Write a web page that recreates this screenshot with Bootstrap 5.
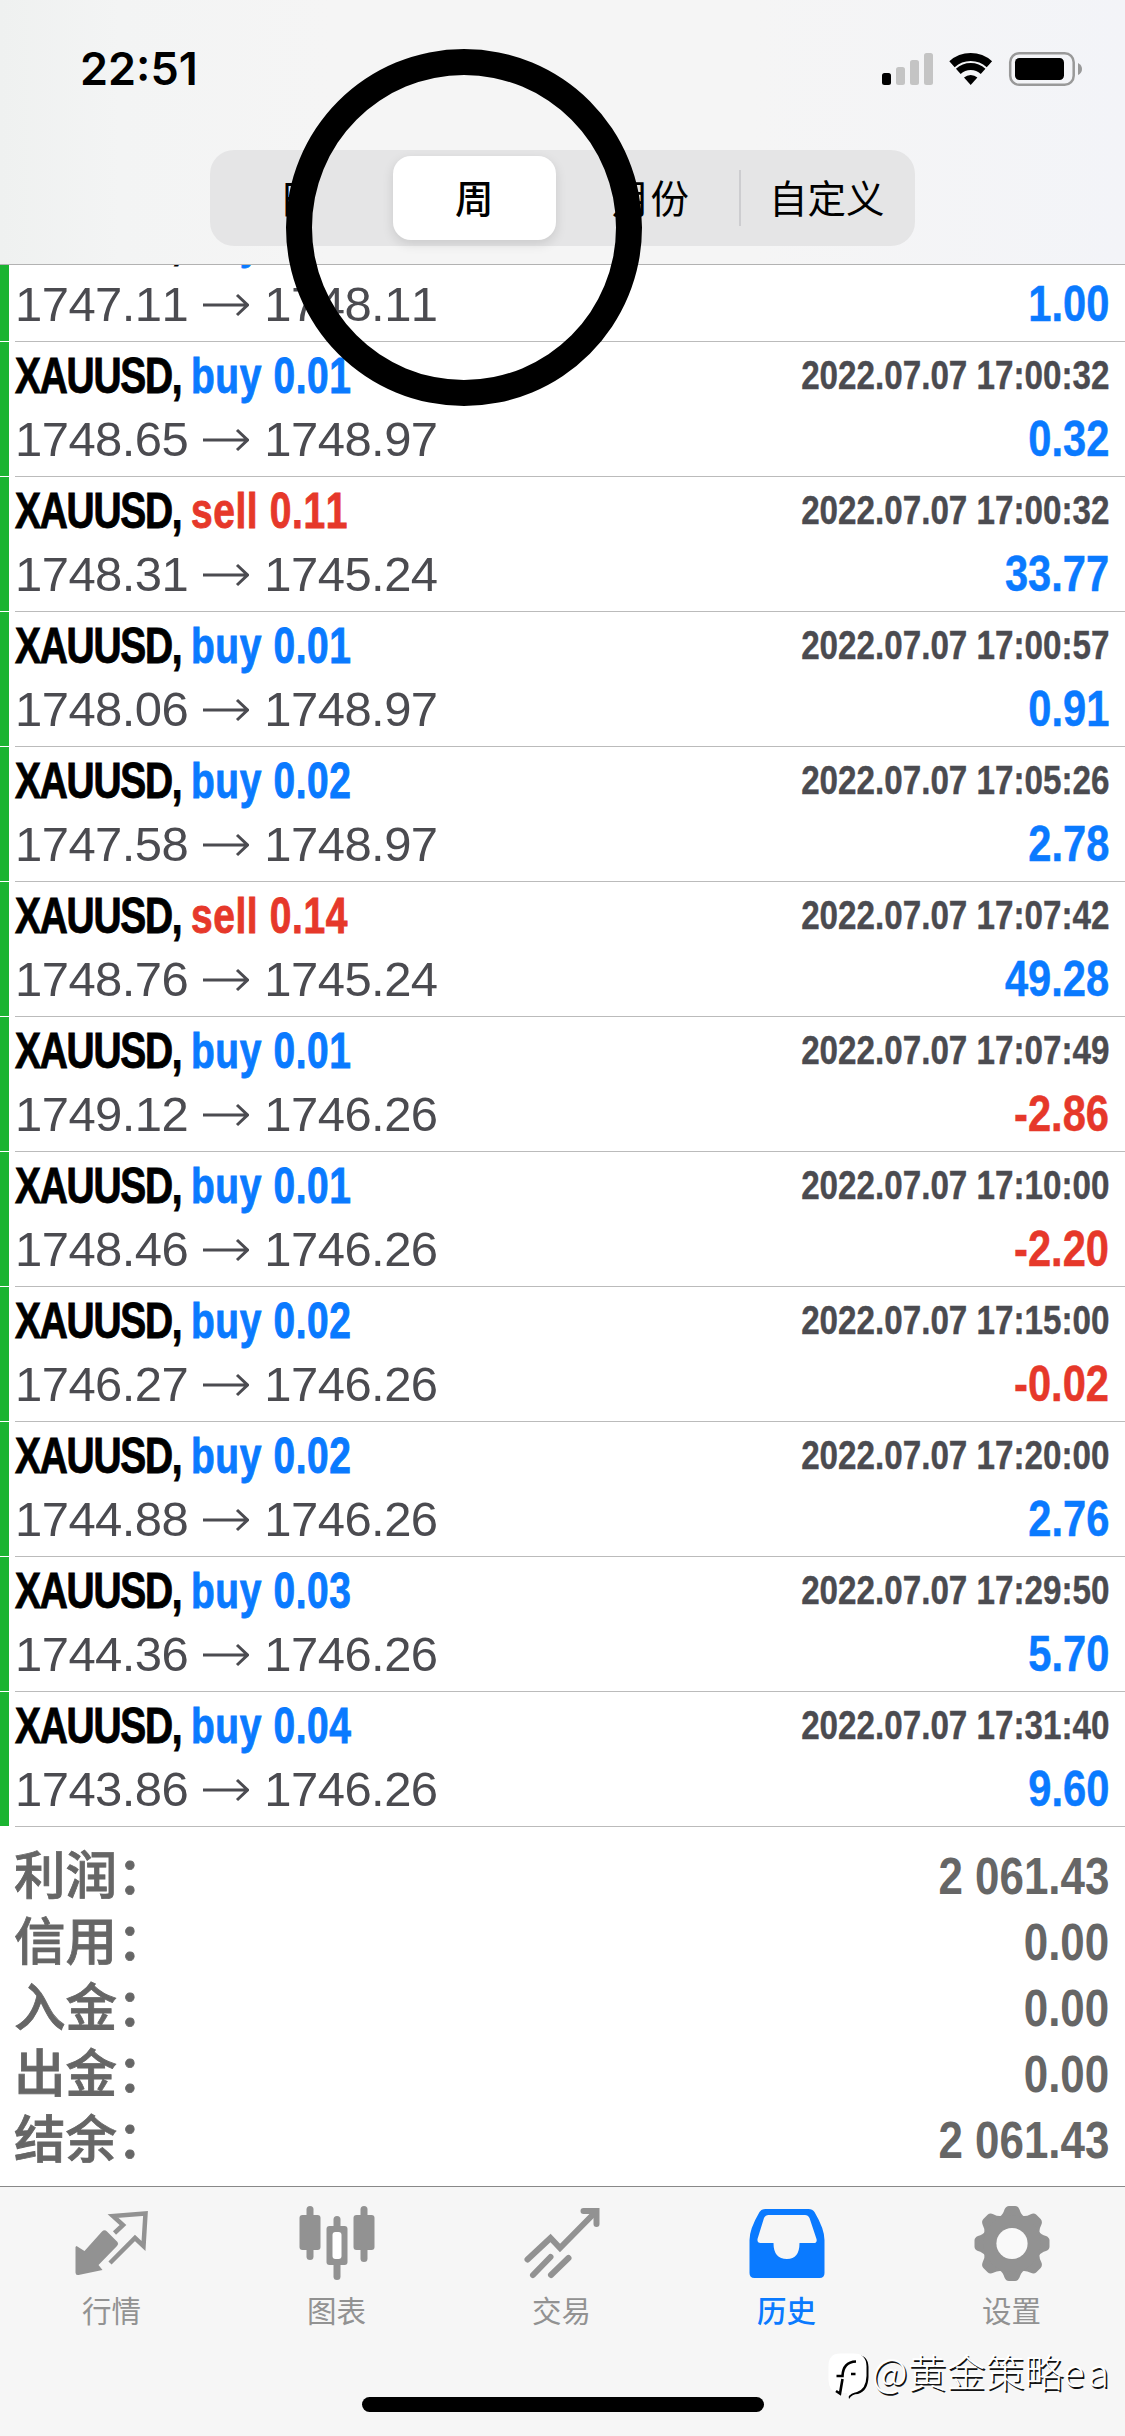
<!DOCTYPE html>
<html lang="zh-CN">
<head>
<meta charset="utf-8">
<meta name="viewport" content="width=device-width, initial-scale=1">
<title>历史</title>
<link href="https://cdn.jsdelivr.net/npm/bootstrap@5.3.0/dist/css/bootstrap.min.css" rel="stylesheet">
<style>
  body { width: 1125px; height: 2436px; overflow: hidden; background: #fff; font-family: "Liberation Sans", "Noto Sans CJK SC", sans-serif; font-kerning: none; }
  .app-head { height: 265px; border-bottom: 1px solid #b2b2b2; background: linear-gradient(90deg, #eff1f0 0, #f3f4f4 120px, #f5f5f5 330px, #f5f5f5 750px, #f3f4f8 1125px); }
  .status-row { height: 150px; padding: 46px 42px 0 80px; }
  .status-row svg { margin-top: 3px; }
  .clock { font: 600 45px/46px Inter, sans-serif; color: #000; }
  .seg { width: 705px; height: 96px; margin: 0 0 0 210px; border-radius: 24px; background: #e5e5e6; padding: 6px 0; }
  .seg .nav-link { height: 84px; margin: 0 7px; padding: 0; border-radius: 18px; color: #000; font: 400 38.5px/80px "Noto Sans CJK SC", sans-serif; text-align: center; white-space: nowrap; }
  .seg .nav-link.active { background: #fff; color: #000; font-weight: 500; box-shadow: 0 4px 12px rgba(0,0,0,.12); }
  .seg .split { border-left: 2px solid #cdcdd0; height: 56px; margin-right: -2px; }
  .deals { height: 1562px; overflow: hidden; }
  .deal { height: 135px; border-radius: 0; padding-left: 9px; background: linear-gradient(#1bb431, #1bb431) 0 0 / 9px 134px no-repeat; }
  .deal-in { height: 135px; margin-left: 6px; border-bottom: 1px solid #bbb; padding-right: 16px; }
  .line-a { height: 65px; }
  .line-b { height: 69px; }
  .name, .when, .gain, .sum { font-weight: 700; white-space: nowrap; }
  .name { font-size: 50px; line-height: 69px; color: #000; transform: scaleX(.778); transform-origin: 0 0; -webkit-text-stroke: .9px currentColor; }
  .name .sym { letter-spacing: -1.6px; }
  .name .op { letter-spacing: .8px; }
  .buy { color: #0a7aff; } .sell { color: #e6382a; }
  .when { font-size: 40px; line-height: 67px; color: #4b4b50; transform: scaleX(.83); transform-origin: 100% 0; -webkit-text-stroke: .4px currentColor; }
  .prices { font-size: 49px; letter-spacing: -.55px; line-height: 65px; height: 65px; color: #4b4b50; white-space: nowrap; }
  .prices svg { margin: 0 15px 0 15px; }
  .gain { font-size: 50px; line-height: 65px; transform: scaleX(.833); transform-origin: 100% 0; -webkit-text-stroke: .5px currentColor; }
  .totals { height: 359px; padding: 16px 16px 0 14px; color: #666; }
  .totals > div { height: 66px; }
  .cap { font: 500 51.5px/57px "Noto Sans CJK SC", sans-serif; -webkit-text-stroke: .8px currentColor; }
  .sum { font-size: 52px; line-height: 66px; transform: scaleX(.845); transform-origin: 100% 0; }
  .tabs { height: 250px; border-top: 1px solid #888; background: #f6f6f6; }
  .tabs .nav-link { padding: 13px 2px 0 0; width: 225px; color: #929292; font: 400 29.5px/44px "Noto Sans CJK SC", sans-serif; }
  .tabs .nav-link.active { color: #0a7aff; font-weight: 500; }
  .tabs svg { width: 90px; height: 84px; }
  .tabs .txt { margin-top: 3px; }
  .tabs .home-bar { width: 402px; height: 15px; border-radius: 8px; background: #000; }
  .ring { left: 286px; top: 49px; width: 356px; height: 357px; border: 26px solid #000; border-radius: 50%; z-index: 5; }
  .wm { left: 826px; top: 2341px; z-index: 6; color: #fff; font: 300 39px/58px "Noto Sans CJK SC", sans-serif; text-shadow: 1.5px 1.5px 0 #111; white-space: nowrap; }
  .wm .tail { letter-spacing: 4px; }
</style>
</head>
<body class="position-relative d-flex flex-column">
<header class="app-head flex-shrink-0">
  <div class="status-row d-flex justify-content-between align-items-start">
    <span class="clock">22:51</span>
    <svg width="202" height="40" viewBox="881 49 202 40">
      <rect x="882" y="73" width="9" height="12" rx="2.5"/>
      <g fill="#c4c4c4"><rect x="896" y="67" width="9" height="18" rx="2.5"/><rect x="910" y="60" width="9" height="25" rx="2.5"/><rect x="924" y="53" width="9" height="32" rx="2.5"/></g>
      <path d="M952 64.200A28 28 0 0 1 989.400 64.200" fill="none" stroke="#000" stroke-width="8"/>
      <path d="M958.300 71.300A18.500 18.500 0 0 1 983.100 71.300" fill="none" stroke="#000" stroke-width="7"/>
      <path d="M964 77.600A10 10 0 0 1 977.400 77.600L970.700 85Z"/>
      <rect x="1010.200" y="53.200" width="63.500" height="31.600" rx="9" fill="none" stroke="#999" stroke-width="2.500"/>
      <rect x="1015" y="58" width="49" height="22" rx="4.500"/>
      <path d="M1078 63q4 2 4 6t-4 6z" fill="#999"/>
    </svg>
  </div>
  <nav class="seg nav nav-pills nav-fill flex-nowrap align-items-center">
    <div class="col-3"><a class="nav-link">日</a></div>
    <div class="col-3"><a class="nav-link active">周</a></div>
    <div class="col-3"><a class="nav-link">月份</a></div>
    <span class="split"></span>
    <div class="col-3"><a class="nav-link">自定义</a></div>
  </nav>
</header>

<main class="deals d-flex flex-column justify-content-end flex-shrink-0" id="deals"></main>

<section class="totals flex-shrink-0" id="totals">
  <div class="d-flex justify-content-between align-items-start"><span class="cap">利润：</span><span class="sum">2 061.43</span></div>
  <div class="d-flex justify-content-between align-items-start"><span class="cap">信用：</span><span class="sum">0.00</span></div>
  <div class="d-flex justify-content-between align-items-start"><span class="cap">入金：</span><span class="sum">0.00</span></div>
  <div class="d-flex justify-content-between align-items-start"><span class="cap">出金：</span><span class="sum">0.00</span></div>
  <div class="d-flex justify-content-between align-items-start"><span class="cap">结余：</span><span class="sum">2 061.43</span></div>
</section>

<footer class="tabs flex-shrink-0 d-flex flex-column align-items-center">
  <nav class="nav flex-nowrap w-100 flex-grow-1">
    <a class="nav-link d-flex flex-column align-items-center">
      <svg viewBox="66.500 2200 90 84"><path d="M114 2233L122.500 2225L112.500 2216L145 2213.500L143 2246L134.500 2238L109.500 2263" fill="none" stroke="#929292" stroke-width="4.500"/><path d="M76 2246L84 2251L101.500 2231.500Q104 2229 106.500 2231.500L117 2242Q118.500 2244 116.500 2246L98 2265L102 2270L78 2275Q75 2275.500 75 2272.500V2247Z" fill="#929292"/></svg>
      <span class="txt">行情</span></a>
    <a class="nav-link d-flex flex-column align-items-center">
      <svg viewBox="291.500 2200 90 84"><g fill="#929292"><rect x="299" y="2215" width="21" height="35" rx="3"/><rect x="306" y="2206" width="7" height="54" rx="3.500"/><rect x="326" y="2226" width="21" height="39" rx="3"/><rect x="333" y="2216" width="7" height="64" rx="3.500"/><rect x="353" y="2215" width="21" height="35" rx="3"/><rect x="360" y="2206" width="7" height="56" rx="3.500"/></g><rect x="332" y="2232" width="9" height="27" rx="3" fill="#fff"/></svg>
      <span class="txt">图表</span></a>
    <a class="nav-link d-flex flex-column align-items-center">
      <svg viewBox="516.500 2200 90 84"><g fill="none" stroke="#929292" stroke-width="6" stroke-linecap="round"><path d="M527 2259.500L550 2238L559.500 2248L595 2212" /><path d="M583 2211H596V2224"/><path d="M532.500 2275L550 2257M550.500 2275L568 2258"/></g></svg>
      <span class="txt">交易</span></a>
    <a class="nav-link active d-flex flex-column align-items-center">
      <svg viewBox="741.500 2200 90 84"><path fill="#0a7aff" fill-rule="evenodd" d="M765 2209H808Q812 2209 814 2212Q824 2229 824 2240V2273Q824 2278 819 2278H754Q749 2278 749 2273V2240Q749 2229 759 2212Q761 2209 765 2209ZM768 2215Q765 2215 763.500 2218L757 2239Q756.500 2243 760 2243H773Q773 2259 786.500 2259Q799 2259 799 2243H813Q817 2243 816 2239L809 2218Q807.500 2215 804.500 2215Z"/></svg>
      <span class="txt">历史</span></a>
    <a class="nav-link d-flex flex-column align-items-center">
      <svg viewBox="-45 -43.500 90 84"><defs><path id="tooth" d="M-12 -27Q-9 -29 -7.500 -34Q-6 -37.500 -3 -37.500H3Q6 -37.500 7.500 -34Q9 -29 12 -27V-14H-12Z"/></defs><g fill="#929292"><use href="#tooth"/><use href="#tooth" transform="rotate(45)"/><use href="#tooth" transform="rotate(90)"/><use href="#tooth" transform="rotate(135)"/><use href="#tooth" transform="rotate(180)"/><use href="#tooth" transform="rotate(225)"/><use href="#tooth" transform="rotate(270)"/><use href="#tooth" transform="rotate(315)"/></g><circle r="22" fill="none" stroke="#929292" stroke-width="13"/><circle r="15.600" fill="#f9f9f9"/></svg>
      <span class="txt">设置</span></a>
  </nav>
  <div class="home-bar mb-4"></div>
</footer>

<div class="ring position-absolute"></div>
<div class="wm position-absolute d-flex align-items-center">
  <svg width="46" height="58" viewBox="6 1 46 58">
    <path d="M22 15H37Q48 15 48.500 27V37Q48 51 38 54Q32 54 29 59L28 52L45 40Z" fill="#000"/>
    <path d="M20 13.500H34Q46 13.500 46.500 26V36Q46 49 37 52Q31 53 28 57L27 53H18Q8.500 51 8.500 40V26Q8.500 13.500 20 13.500Z" fill="#fff"/>
    <path d="M16.500 36H22.500Q23 22 36 21.500M22.500 39L20 53.500L16 51M31 34H35.500" fill="none" stroke="#000" stroke-width="2.600"/>
  </svg>
  <span>@黄金策略<span class="tail">ea</span></span>
</div>

<script>
  const deals = [
    ['buy', '0.01', '17:00:32', '1747.11', '1748.11', '1.00'],
    ['buy', '0.01', '17:00:32', '1748.65', '1748.97', '0.32'],
    ['sell', '0.11', '17:00:32', '1748.31', '1745.24', '33.77'],
    ['buy', '0.01', '17:00:57', '1748.06', '1748.97', '0.91'],
    ['buy', '0.02', '17:05:26', '1747.58', '1748.97', '2.78'],
    ['sell', '0.14', '17:07:42', '1748.76', '1745.24', '49.28'],
    ['buy', '0.01', '17:07:49', '1749.12', '1746.26', '-2.86'],
    ['buy', '0.01', '17:10:00', '1748.46', '1746.26', '-2.20'],
    ['buy', '0.02', '17:15:00', '1746.27', '1746.26', '-0.02'],
    ['buy', '0.02', '17:20:00', '1744.88', '1746.26', '2.76'],
    ['buy', '0.03', '17:29:50', '1744.36', '1746.26', '5.70'],
    ['buy', '0.04', '17:31:40', '1743.86', '1746.26', '9.60']
  ];
  const arrow = '<svg width="46" height="24" viewBox="0 0 46 24" fill="none" stroke="#4b4b50" stroke-width="3"><path d="M0 12H44M34 2L44.500 12L34 22"/></svg>';
  document.getElementById('deals').innerHTML = deals.map(([side, lots, time, from, to, gain]) => `
    <div class="deal flex-shrink-0"><div class="deal-in">
      <div class="line-a d-flex justify-content-between">
        <span class="name"><span class="sym">XAUUSD, </span><span class="op ${side}">${side} ${lots}</span></span>
        <span class="when">2022.07.07 ${time}</span>
      </div>
      <div class="line-b d-flex justify-content-between">
        <span class="prices d-flex align-items-center">${from}${arrow}${to}</span>
        <span class="gain ${gain[0] === '-' ? 'sell' : 'buy'}">${gain}</span>
      </div>
    </div></div>`).join('');
</script>
<script src="https://cdn.jsdelivr.net/npm/bootstrap@5.3.0/dist/js/bootstrap.bundle.min.js"></script>
</body>
</html>
